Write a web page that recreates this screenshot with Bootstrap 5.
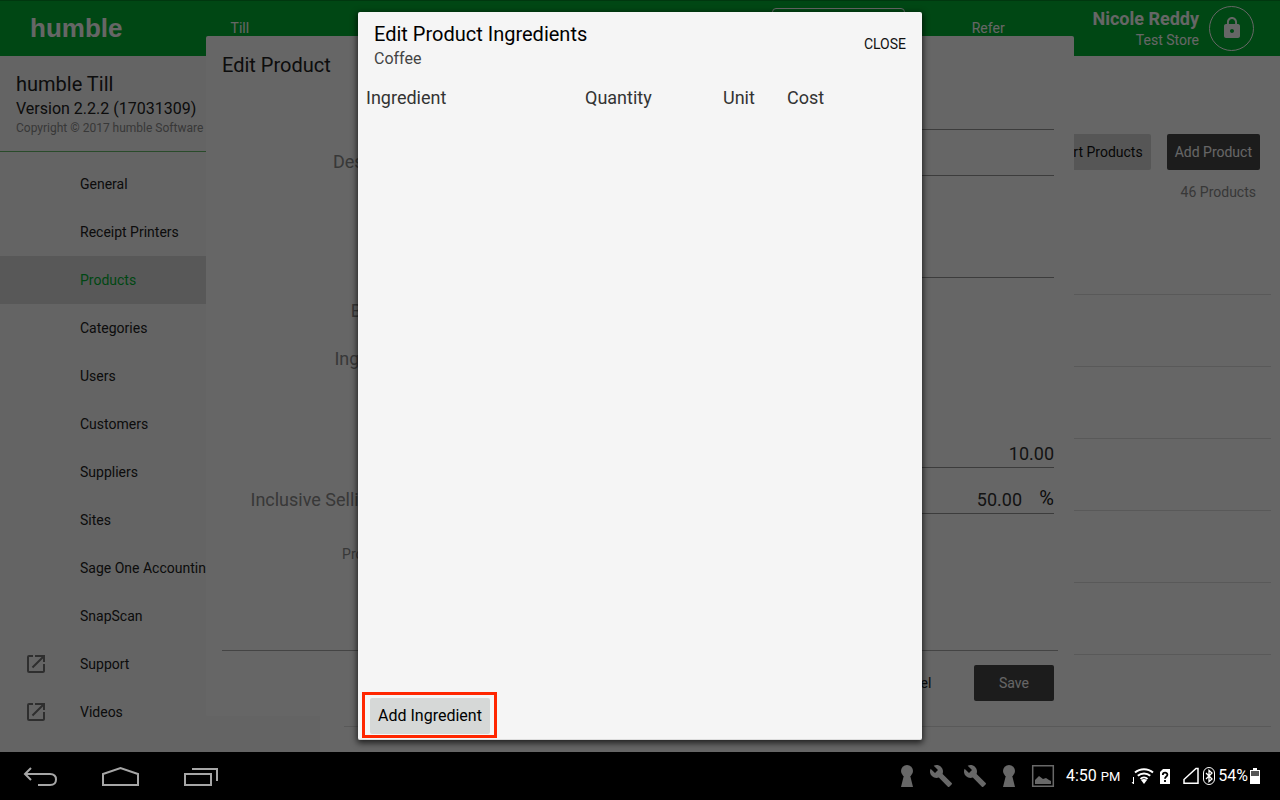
<!DOCTYPE html>
<html lang="en">
<head>
<meta charset="utf-8">
<meta name="viewport" content="width=device-width, initial-scale=1">
<title>humble Till</title>
<link href="https://cdn.jsdelivr.net/npm/bootstrap@5.3.0/dist/css/bootstrap.min.css" rel="stylesheet">
<style>
  body { font-family: Roboto, sans-serif; font-size: 14px; line-height: 20px; color: #222; background: #fff; }
  h1, h2, h3 { font-weight: 400; font-size: 20px; line-height: 26px; margin: 0; }
  .stage { min-height: 0; }

  /* Top bar */
  .topbar { height: 56px; background: #00b232; box-shadow: inset 0 1px #008a26; color: #fff; }
  .topbar a { color: #fff; text-decoration: none; }
  .logo { width: 165px; padding-left: 30px; font: 700 26px/32px "Liberation Sans", sans-serif; }
  .tabs a { height: 40px; margin: 0 8px; line-height: 38px; border: 1px solid transparent; border-radius: 4px; }
  .tabs a.active { border-color: #fff; }
  .who { width: 136px; padding-top: 1px; font-size: 14px; }
  .who strong { font-size: 18px; line-height: 22px; }
  .lock { width: 45px; height: 45px; border: 1px solid #fff; color: #fff; background: none; margin: 0 26px 0 10px; }

  /* Side menu */
  .side { width: 320px; background: #fafafa; }
  .about { height: 96px; padding: 15px 16px 0; border-bottom: 1px solid #66bb6a; }
  .about p { margin: 0; font-size: 16px; line-height: 24px; }
  .about small { font-size: 12px; line-height: 14px; color: #8c8c8c; }
  .menu a { height: 48px; padding-left: 24px; color: #222; text-decoration: none; }
  .menu a.active { background: #dcdcdc; color: #00b232; }
  .menu i { width: 56px; height: 24px; color: #737373; }

  /* Buttons */
  .flat { height: 36px; padding: 0 8px; border: 0; border-radius: 2px; font-size: 14px; line-height: 20px; }
  .flat-dark, .flat-dark:hover { background: #464646; color: #fff; }
  .flat-grey, .flat-grey:hover { background: #d6d8d7; color: #111; }
  .w80 { width: 80px; }

  /* Product list */
  .tools { padding: 78px 20px 0 0; }
  .count { padding: 12px 24px 0 0; color: #8c8c8c; }
  .products { margin: 21px 9px 0 24px; }
  .products li { height: 72px; border-bottom: 1px solid #dedede; }

  /* Dialogs */
  .layer { position: absolute; inset: 0; }
  .scrim { position: absolute; inset: 0; background: rgba(0, 0, 0, .6); }
  .dialog { border-radius: 2px; }
  .dlg-product { width: 868px; height: calc(100% - 72px); background: #fff; }
  .dlg-product h2 { padding: 16px 16px 6px; }
  .frow { height: 46px; margin-right: 20px; }
  .frow.tall { height: 48px; }
  .frow label { width: 218px; padding-top: 18px; font-size: 18px; color: #8c8c8c; text-align: right; }
  .frow .box { margin-left: 32px; border-bottom: 1px solid #969696; }
  .frow .box.bare { margin-left: 250px; }
  .frow input { border: 0; background: none; font-size: 18px; color: #333; text-align: right; padding: 18px 0 0; min-width: 0; }
  .frow .pct { width: 32px; font-size: 20px; padding-top: 14px; text-align: right; }
  .frow label.minor { font-size: 14px; }
  .skip { margin-top: 56px; }
  .foot { margin: 0 16px; padding: 14px 4px 15px; border-top: 1px solid #aaa; gap: 24px; }

  .dlg-ingredients { width: 564px; height: calc(100% - 24px); background: #f5f5f5; border-bottom: 1px solid #ddd; box-shadow: 0 2px 6px 1px rgba(0, 0, 0, .7); }
  .dlg-head { padding: 9px 16px 0; }
  .dlg-head h2 { color: #000; }
  .dlg-head p { margin: 0; font-size: 16px; line-height: 24px; color: #444; }
  .close-btn { border: 0; background: none; padding: 13px 0 0; color: #111; }
  .ing { margin-top: 15px; table-layout: fixed; font-size: 18px; line-height: 24px; color: #333; }
  .ing th { font-weight: 400; padding: 0 0 0 8px; }
  .c-ing { width: 219px; } .c-qty { width: 138px; } .c-unit { width: 64px; }
  .spot { margin: 0 0 1px 4px; padding: 3px 4px 1px 5px; border: 3px solid #ff2600; }
  .spot .flat { font-size: 16px; width: 120px; color: #000; }

  /* System bar */
  .sysbar { height: 48px; background: #000; color: #fff; }
  .sysbar button { border: 0; background: none; padding: 0; color: #a6a6a6; line-height: 0; }
  .keys { padding-left: 22px; gap: 42px; }
  .notes { color: #686868; gap: 10px; }
  .clock { font-size: 16px; margin: 0 11px; }
  .clock span { font-size: 13px; }
  .signal { margin-left: 12px; }
  .batt { font-size: 16px; margin: 0 1px 0 3px; }
  .tray { padding-right: 19px; }
  svg { display: block; flex: none; }
</style>
</head>
<body class="vh-100 d-flex flex-column overflow-hidden">

<div class="stage flex-grow-1 position-relative overflow-hidden d-flex flex-column">
  <header class="topbar d-flex align-items-center flex-shrink-0">
    <a class="logo" href="#">humble</a>
    <nav class="tabs d-flex flex-fill text-center">
      <a class="flex-fill w-100" href="#">Till</a>
      <a class="flex-fill w-100" href="#" aria-label="Sales"></a>
      <a class="flex-fill w-100" href="#" aria-label="Stock"></a>
      <a class="flex-fill w-100" href="#" aria-label="Reports"></a>
      <a class="flex-fill w-100 active" href="#" aria-label="Settings"></a>
      <a class="flex-fill w-100" href="#">Refer</a>
    </nav>
    <div class="who d-flex flex-column text-end"><strong>Nicole Reddy</strong><span>Test Store</span></div>
    <button class="lock rounded-circle d-flex align-items-center justify-content-center p-0" type="button" aria-label="Lock">
      <svg width="24" height="24" viewBox="0 0 24 24" fill="currentColor"><path d="M18 8h-1V6c0-2.760-2.240-5-5-5S7 3.240 7 6v2H6c-1.100 0-2 .9-2 2v10c0 1.100.9 2 2 2h12c1.100 0 2-.9 2-2V10c0-1.100-.9-2-2-2zm-6 9c-1.100 0-2-.9-2-2s.9-2 2-2 2 .9 2 2-.9 2-2 2zm3.100-9H8.900V6c0-1.710 1.390-3.100 3.100-3.100s3.100 1.390 3.100 3.100v2z"/></svg>
    </button>
  </header>

  <div class="d-flex flex-grow-1 overflow-hidden">
    <aside class="side flex-shrink-0">
      <div class="about">
        <h1>humble Till</h1>
        <p>Version 2.2.2 (17031309)</p>
        <small class="d-block text-nowrap">Copyright © 2017 humble Software</small>
      </div>
      <nav class="menu pt-2 d-flex flex-column">
        <a class="d-flex align-items-center" href="#"><i></i>General</a>
        <a class="d-flex align-items-center" href="#"><i></i>Receipt Printers</a>
        <a class="d-flex align-items-center active" href="#"><i></i>Products</a>
        <a class="d-flex align-items-center" href="#"><i></i>Categories</a>
        <a class="d-flex align-items-center" href="#"><i></i>Users</a>
        <a class="d-flex align-items-center" href="#"><i></i>Customers</a>
        <a class="d-flex align-items-center" href="#"><i></i>Suppliers</a>
        <a class="d-flex align-items-center" href="#"><i></i>Sites</a>
        <a class="d-flex align-items-center" href="#"><i></i>Sage One Accounting</a>
        <a class="d-flex align-items-center" href="#"><i></i>SnapScan</a>
        <a class="d-flex align-items-center" href="#"><i><svg width="24" height="24" viewBox="0 0 24 24" fill="currentColor"><path d="M19 19H5V5h4V3H5a2 2 0 0 0-2 2v14a2 2 0 0 0 2 2h14c1.100 0 2-.9 2-2v-7h-2v7zM11 3v2h6.590L7.760 14.830l1.410 1.410L19 6.410V10h2V3z"/></svg></i>Support</a>
        <a class="d-flex align-items-center" href="#"><i><svg width="24" height="24" viewBox="0 0 24 24" fill="currentColor"><path d="M19 19H5V5h4V3H5a2 2 0 0 0-2 2v14a2 2 0 0 0 2 2h14c1.100 0 2-.9 2-2v-7h-2v7zM11 3v2h6.590L7.760 14.830l1.410 1.410L19 6.410V10h2V3z"/></svg></i>Videos</a>
      </nav>
    </aside>

    <main class="flex-grow-1">
      <div class="tools d-flex justify-content-end gap-3">
        <button class="btn flat flat-grey" type="button">Import Products</button>
        <button class="btn flat flat-dark" type="button">Add Product</button>
      </div>
      <div class="count text-end">46 Products</div>
      <ul class="products list-unstyled">
        <li></li><li></li><li></li><li></li><li></li><li></li><li></li>
      </ul>
    </main>
  </div>

  <div class="layer d-flex align-items-center justify-content-center">
    <form class="dialog dlg-product d-flex flex-column" onsubmit="return false">
      <h2>Edit Product</h2>
      <div class="frow d-flex"><div class="box bare d-flex flex-fill h-100"><input class="w-100" type="text" aria-label="Name"></div></div>
      <div class="frow d-flex align-items-center"><label for="f-desc">Description</label><div class="box d-flex flex-fill h-100"><input id="f-desc" class="w-100" type="text"></div></div>
      <div class="frow d-flex skip"><div class="box bare d-flex flex-fill h-100"><input class="w-100" type="text" aria-label="Category"></div></div>
      <div class="frow tall d-flex align-items-center"><label>Bar Code</label></div>
      <div class="frow tall d-flex align-items-center"><label>Ingredients</label></div>
      <div class="frow d-flex mt-5"><div class="box bare d-flex flex-fill h-100"><input class="w-100" type="text" value="10.00" aria-label="Cost"></div></div>
      <div class="frow d-flex align-items-center"><label for="f-sell">Inclusive Selling Price</label><div class="box d-flex align-items-center flex-fill h-100"><input id="f-sell" class="flex-fill h-100" type="text" value="50.00"><span class="pct">%</span></div></div>
      <div class="frow d-flex align-items-center mt-2"><label class="minor">Product Type</label></div>
      <div class="foot d-flex justify-content-end mt-auto">
        <button class="btn flat w80" type="button">Cancel</button>
        <button class="btn flat flat-dark w80" type="submit">Save</button>
      </div>
    </form>
  </div>

  <div class="scrim"></div>

  <div class="layer d-flex align-items-center justify-content-center">
    <section class="dialog dlg-ingredients d-flex flex-column" role="dialog" aria-labelledby="ing-title">
      <div class="dlg-head d-flex justify-content-between align-items-start">
        <div>
          <h2 id="ing-title">Edit Product Ingredients</h2>
          <p>Coffee</p>
        </div>
        <button class="close-btn" type="button">CLOSE</button>
      </div>
      <table class="ing w-100">
        <thead><tr><th class="c-ing">Ingredient</th><th class="c-qty">Quantity</th><th class="c-unit">Unit</th><th>Cost</th></tr></thead>
        <tbody></tbody>
      </table>
      <div class="spot mt-auto align-self-start">
        <button class="btn flat flat-grey" type="button">Add Ingredient</button>
      </div>
    </section>
  </div>
</div>

<footer class="sysbar d-flex align-items-center justify-content-between flex-shrink-0">
  <div class="keys d-flex align-items-center">
    <button type="button" aria-label="Back"><svg width="38" height="24" viewBox="0 0 38 24" fill="none" stroke="currentColor" stroke-width="2"><path d="M9 4 3 10l6 6M3 10h25c3.500 0 6 2 6 5.500s-2.500 5.500-6 5.500H16"/></svg></button>
    <button type="button" aria-label="Home"><svg width="38" height="24" viewBox="0 0 38 24" fill="none" stroke="currentColor" stroke-width="2"><path d="M1 21V10l17.500-6L36 10v11z"/></svg></button>
    <button type="button" aria-label="Recent apps"><svg width="38" height="24" viewBox="0 0 38 24" fill="none" stroke="currentColor" stroke-width="2"><path d="M3 10h26v11H3zM10 5h25v12"/></svg></button>
  </div>
  <div class="tray d-flex align-items-center">
    <div class="notes d-flex align-items-center">
      <svg width="24" height="24" viewBox="0 0 24 24" fill="currentColor"><circle cx="12" cy="7" r="6"/><path d="M9 11h6l3 12H6z"/></svg>
      <svg width="24" height="24" viewBox="0 0 24 24" fill="currentColor"><path d="m22.700 19-9.100-9.100c.9-2.300.4-5-1.500-6.900-2-2-5-2.400-7.400-1.300L9 6 6 9 1.600 4.700C.4 7.100.9 10.100 2.900 12.100c1.900 1.900 4.600 2.400 6.900 1.500l9.100 9.100c.4.4 1 .4 1.400 0l2.300-2.300c.5-.4.5-1.100.1-1.400z"/></svg>
      <svg width="24" height="24" viewBox="0 0 24 24" fill="currentColor"><path d="m22.700 19-9.100-9.100c.9-2.300.4-5-1.500-6.900-2-2-5-2.400-7.400-1.300L9 6 6 9 1.600 4.700C.4 7.100.9 10.100 2.900 12.100c1.900 1.900 4.600 2.400 6.900 1.500l9.100 9.100c.4.4 1 .4 1.400 0l2.300-2.300c.5-.4.5-1.100.1-1.400z"/></svg>
      <svg width="24" height="24" viewBox="0 0 24 24" fill="currentColor"><circle cx="12" cy="7" r="6"/><path d="M9 11h6l3 12H6z"/></svg>
      <svg width="24" height="24" viewBox="0 0 24 24" fill="currentColor"><path fill="none" stroke="currentColor" stroke-width="1.500" d="M1.700 1.700h20.600v20.600H1.700z"/><path d="M4 20v-4l4-4 4 3 3-1 3 2 2 1v3z"/></svg>
    </div>
    <div class="clock">4:50 <span>PM</span></div>
    <svg width="24" height="20" viewBox="0 0 24 20" fill="none" stroke="#fff" stroke-width="2"><path d="M4 6.500c5-4.500 13-4.500 18 0M6.800 9.800c3.500-3.200 9-3.200 12.400 0M9.500 13c2-2 5-2 7 0"/><path fill="#fff" stroke="none" d="m13 18-3-4c2-1.500 4-1.500 6 0z"/><path stroke-width="1" d="M2.500 11v7L1 16"/></svg>
    <svg class="ms-1" width="12" height="20" viewBox="0 0 12 20"><path fill="#fff" d="M4 3h7v15H1V6z"/><path fill="none" stroke="#000" stroke-width="1.800" d="M3.800 9c0-3 4.600-3 4.600-.3C8.400 10.500 6 10.500 6 12.700M6 14v2"/></svg>
    <svg class="signal" width="16" height="20" viewBox="0 0 16 20" fill="none" stroke="#fff" stroke-width="1.500"><path d="M1 17.200h14V2.500h-2L1 13.500z"/></svg>
    <svg class="ms-1" width="12" height="20" viewBox="0 0 12 20" fill="none" stroke="#fff"><rect x=".5" y="1.500" width="11" height="17" rx="5.500"/><path stroke-width="1.300" d="m3 7 6 6-3 2.500v-11L9 7l-6 6"/></svg>
    <div class="batt">54%</div>
    <svg width="12" height="20" viewBox="0 0 12 20"><path fill="#fff" d="M4 2h4v2h3v14H1V4h3z"/><path fill="#555" d="M2 5h8v5H2z"/></svg>
  </div>
</footer>

<script src="https://cdn.jsdelivr.net/npm/bootstrap@5.3.0/dist/js/bootstrap.bundle.min.js"></script>
</body>
</html>
